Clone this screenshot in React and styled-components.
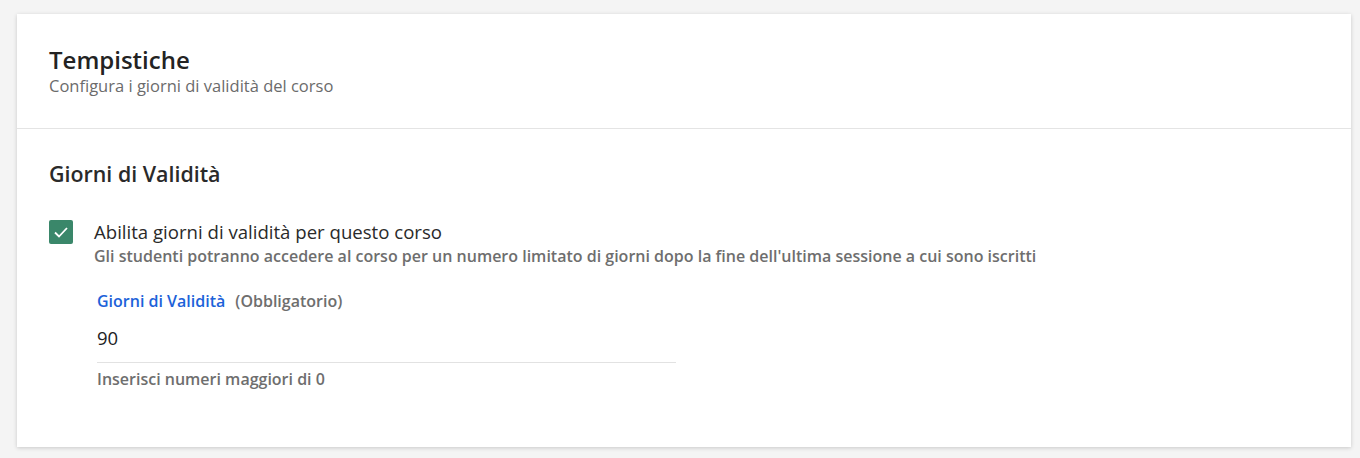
import React, { useState } from "react";
import styled, { createGlobalStyle } from "styled-components";

const GlobalStyle = createGlobalStyle`
  body {
    margin: 0;
    background: #f4f4f4;
    font-family: "Open Sans", "Noto Sans", sans-serif;
    color: #222;
  }
`;

const Page = styled.div`
  padding: 14px 9px 12px 17px;
`;

const Card = styled.div`
  background: #fff;
  box-shadow: 0 1px 4px rgba(0, 0, 0, 0.18);
`;

const Header = styled.div`
  padding: 30px 32px 32px;
  border-bottom: 1px solid #e4e4e4;
`;

const Title = styled.h1`
  margin: 0;
  font-size: 24px;
  line-height: 32px;
  font-weight: 600;
  color: #232323;
`;

const Subtitle = styled.p`
  margin: 0;
  font-size: 16.5px;
  line-height: 20px;
  font-weight: 500;
  color: #6b6b6b;
`;

const Section = styled.div`
  padding: 30px 32px 57px;
`;

const SectionTitle = styled.h2`
  margin: 0 0 30px;
  font-size: 21.4px;
  line-height: 30px;
  font-weight: 600;
  color: #2a2a2a;
`;

const CheckRow = styled.label`
  display: flex;
  gap: 21px;
  cursor: pointer;
`;

const Box = styled.span`
  flex: none;
  width: 24px;
  height: 24px;
  margin-top: 1px;
  border-radius: 2px;
  background: ${(p) => (p.checked ? "#3a876a" : "#fff")};
  border: ${(p) => (p.checked ? "none" : "2px solid #999")};
  box-sizing: border-box;
  display: flex;
  align-items: center;
  justify-content: center;
`;

const CheckText = styled.div`
  display: flex;
  flex-direction: column;
`;

const CheckLabel = styled.span`
  font-size: 18.6px;
  line-height: 26px;
  color: #2a2a2a;
`;

const CheckHint = styled.span`
  font-size: 16px;
  line-height: 22px;
  font-weight: 600;
  color: #6e6e6e;
`;

const Field = styled.div`
  margin: 23px 0 0 3px;
  width: 579px;
`;

const FieldLabel = styled.div`
  font-size: 16px;
  line-height: 22px;
  font-weight: 600;
  color: #1c62d9;
`;

const Required = styled.span`
  margin-left: 10px;
  color: #6e6e6e;
`;

const Input = styled.input`
  display: block;
  width: 100%;
  box-sizing: border-box;
  border: none;
  border-bottom: 1px solid #e2e2e2;
  outline: none;
  padding: 13px 0 11px;
  font-family: inherit;
  font-size: 18.5px;
  line-height: 26px;
  color: #222;
  background: transparent;
`;

const Help = styled.div`
  margin-top: 5px;
  font-size: 16px;
  line-height: 22px;
  font-weight: 600;
  color: #6e6e6e;
`;

export default function App() {
  const [enabled, setEnabled] = useState(true);
  const [days, setDays] = useState("90");

  return (
    <Page>
      <GlobalStyle />
      <Card>
        <Header>
          <Title>Tempistiche</Title>
          <Subtitle>Configura i giorni di validità del corso</Subtitle>
        </Header>
        <Section>
          <SectionTitle>Giorni di Validità</SectionTitle>
          <CheckRow onClick={() => setEnabled(!enabled)}>
            <Box checked={enabled}>
              {enabled && (
                <svg width="18" height="18" viewBox="0 0 18 18">
                  <path
                    d="M3 9.5l4 4 8-8.5"
                    fill="none"
                    stroke="#fff"
                    strokeWidth="1.8"
                  />
                </svg>
              )}
            </Box>
            <CheckText>
              <CheckLabel>Abilita giorni di validità per questo corso</CheckLabel>
              <CheckHint>
                Gli studenti potranno accedere al corso per un numero limitato di giorni dopo la fine dell'ultima sessione a cui sono iscritti
              </CheckHint>
              {enabled && (
                <Field>
                  <FieldLabel>
                    Giorni di Validità<Required>(Obbligatorio)</Required>
                  </FieldLabel>
                  <Input value={days} onChange={(e) => setDays(e.target.value)} />
                  <Help>Inserisci numeri maggiori di 0</Help>
                </Field>
              )}
            </CheckText>
          </CheckRow>
        </Section>
      </Card>
    </Page>
  );
}
